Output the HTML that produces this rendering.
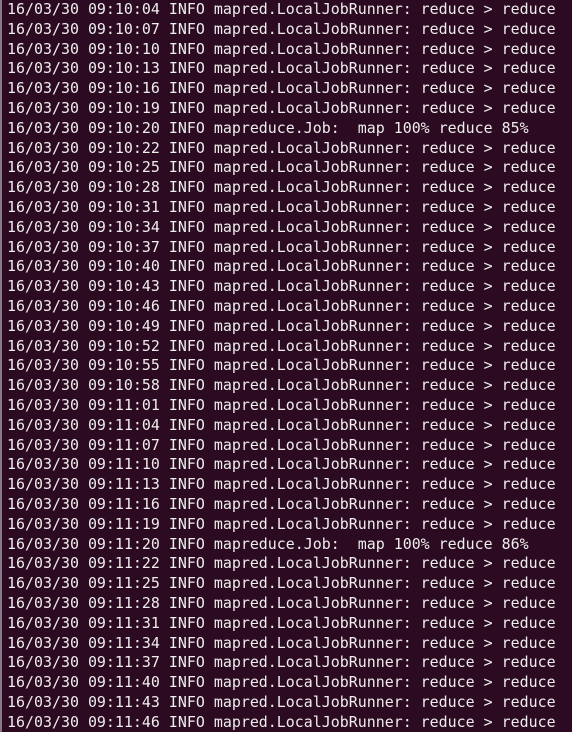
<!DOCTYPE html>
<html><head><meta charset="utf-8"><style>
html,body{margin:0;padding:0;width:572px;height:732px;overflow:hidden;background:#2c0a22;}
.b{position:absolute;left:0;top:0;width:2px;height:732px;background:#8a7a86;}
pre{position:absolute;left:7px;top:0px;margin:0;font-family:"DejaVu Sans Mono","Liberation Mono",monospace;font-size:14.95px;line-height:19.8px;color:#eeeeec;letter-spacing:0;}
</style></head><body><div class="b"></div><pre>16/03/30 09:10:04 INFO mapred.LocalJobRunner: reduce &gt; reduce
16/03/30 09:10:07 INFO mapred.LocalJobRunner: reduce &gt; reduce
16/03/30 09:10:10 INFO mapred.LocalJobRunner: reduce &gt; reduce
16/03/30 09:10:13 INFO mapred.LocalJobRunner: reduce &gt; reduce
16/03/30 09:10:16 INFO mapred.LocalJobRunner: reduce &gt; reduce
16/03/30 09:10:19 INFO mapred.LocalJobRunner: reduce &gt; reduce
16/03/30 09:10:20 INFO mapreduce.Job:  map 100% reduce 85%
16/03/30 09:10:22 INFO mapred.LocalJobRunner: reduce &gt; reduce
16/03/30 09:10:25 INFO mapred.LocalJobRunner: reduce &gt; reduce
16/03/30 09:10:28 INFO mapred.LocalJobRunner: reduce &gt; reduce
16/03/30 09:10:31 INFO mapred.LocalJobRunner: reduce &gt; reduce
16/03/30 09:10:34 INFO mapred.LocalJobRunner: reduce &gt; reduce
16/03/30 09:10:37 INFO mapred.LocalJobRunner: reduce &gt; reduce
16/03/30 09:10:40 INFO mapred.LocalJobRunner: reduce &gt; reduce
16/03/30 09:10:43 INFO mapred.LocalJobRunner: reduce &gt; reduce
16/03/30 09:10:46 INFO mapred.LocalJobRunner: reduce &gt; reduce
16/03/30 09:10:49 INFO mapred.LocalJobRunner: reduce &gt; reduce
16/03/30 09:10:52 INFO mapred.LocalJobRunner: reduce &gt; reduce
16/03/30 09:10:55 INFO mapred.LocalJobRunner: reduce &gt; reduce
16/03/30 09:10:58 INFO mapred.LocalJobRunner: reduce &gt; reduce
16/03/30 09:11:01 INFO mapred.LocalJobRunner: reduce &gt; reduce
16/03/30 09:11:04 INFO mapred.LocalJobRunner: reduce &gt; reduce
16/03/30 09:11:07 INFO mapred.LocalJobRunner: reduce &gt; reduce
16/03/30 09:11:10 INFO mapred.LocalJobRunner: reduce &gt; reduce
16/03/30 09:11:13 INFO mapred.LocalJobRunner: reduce &gt; reduce
16/03/30 09:11:16 INFO mapred.LocalJobRunner: reduce &gt; reduce
16/03/30 09:11:19 INFO mapred.LocalJobRunner: reduce &gt; reduce
16/03/30 09:11:20 INFO mapreduce.Job:  map 100% reduce 86%
16/03/30 09:11:22 INFO mapred.LocalJobRunner: reduce &gt; reduce
16/03/30 09:11:25 INFO mapred.LocalJobRunner: reduce &gt; reduce
16/03/30 09:11:28 INFO mapred.LocalJobRunner: reduce &gt; reduce
16/03/30 09:11:31 INFO mapred.LocalJobRunner: reduce &gt; reduce
16/03/30 09:11:34 INFO mapred.LocalJobRunner: reduce &gt; reduce
16/03/30 09:11:37 INFO mapred.LocalJobRunner: reduce &gt; reduce
16/03/30 09:11:40 INFO mapred.LocalJobRunner: reduce &gt; reduce
16/03/30 09:11:43 INFO mapred.LocalJobRunner: reduce &gt; reduce
16/03/30 09:11:46 INFO mapred.LocalJobRunner: reduce &gt; reduce</pre></body></html>
